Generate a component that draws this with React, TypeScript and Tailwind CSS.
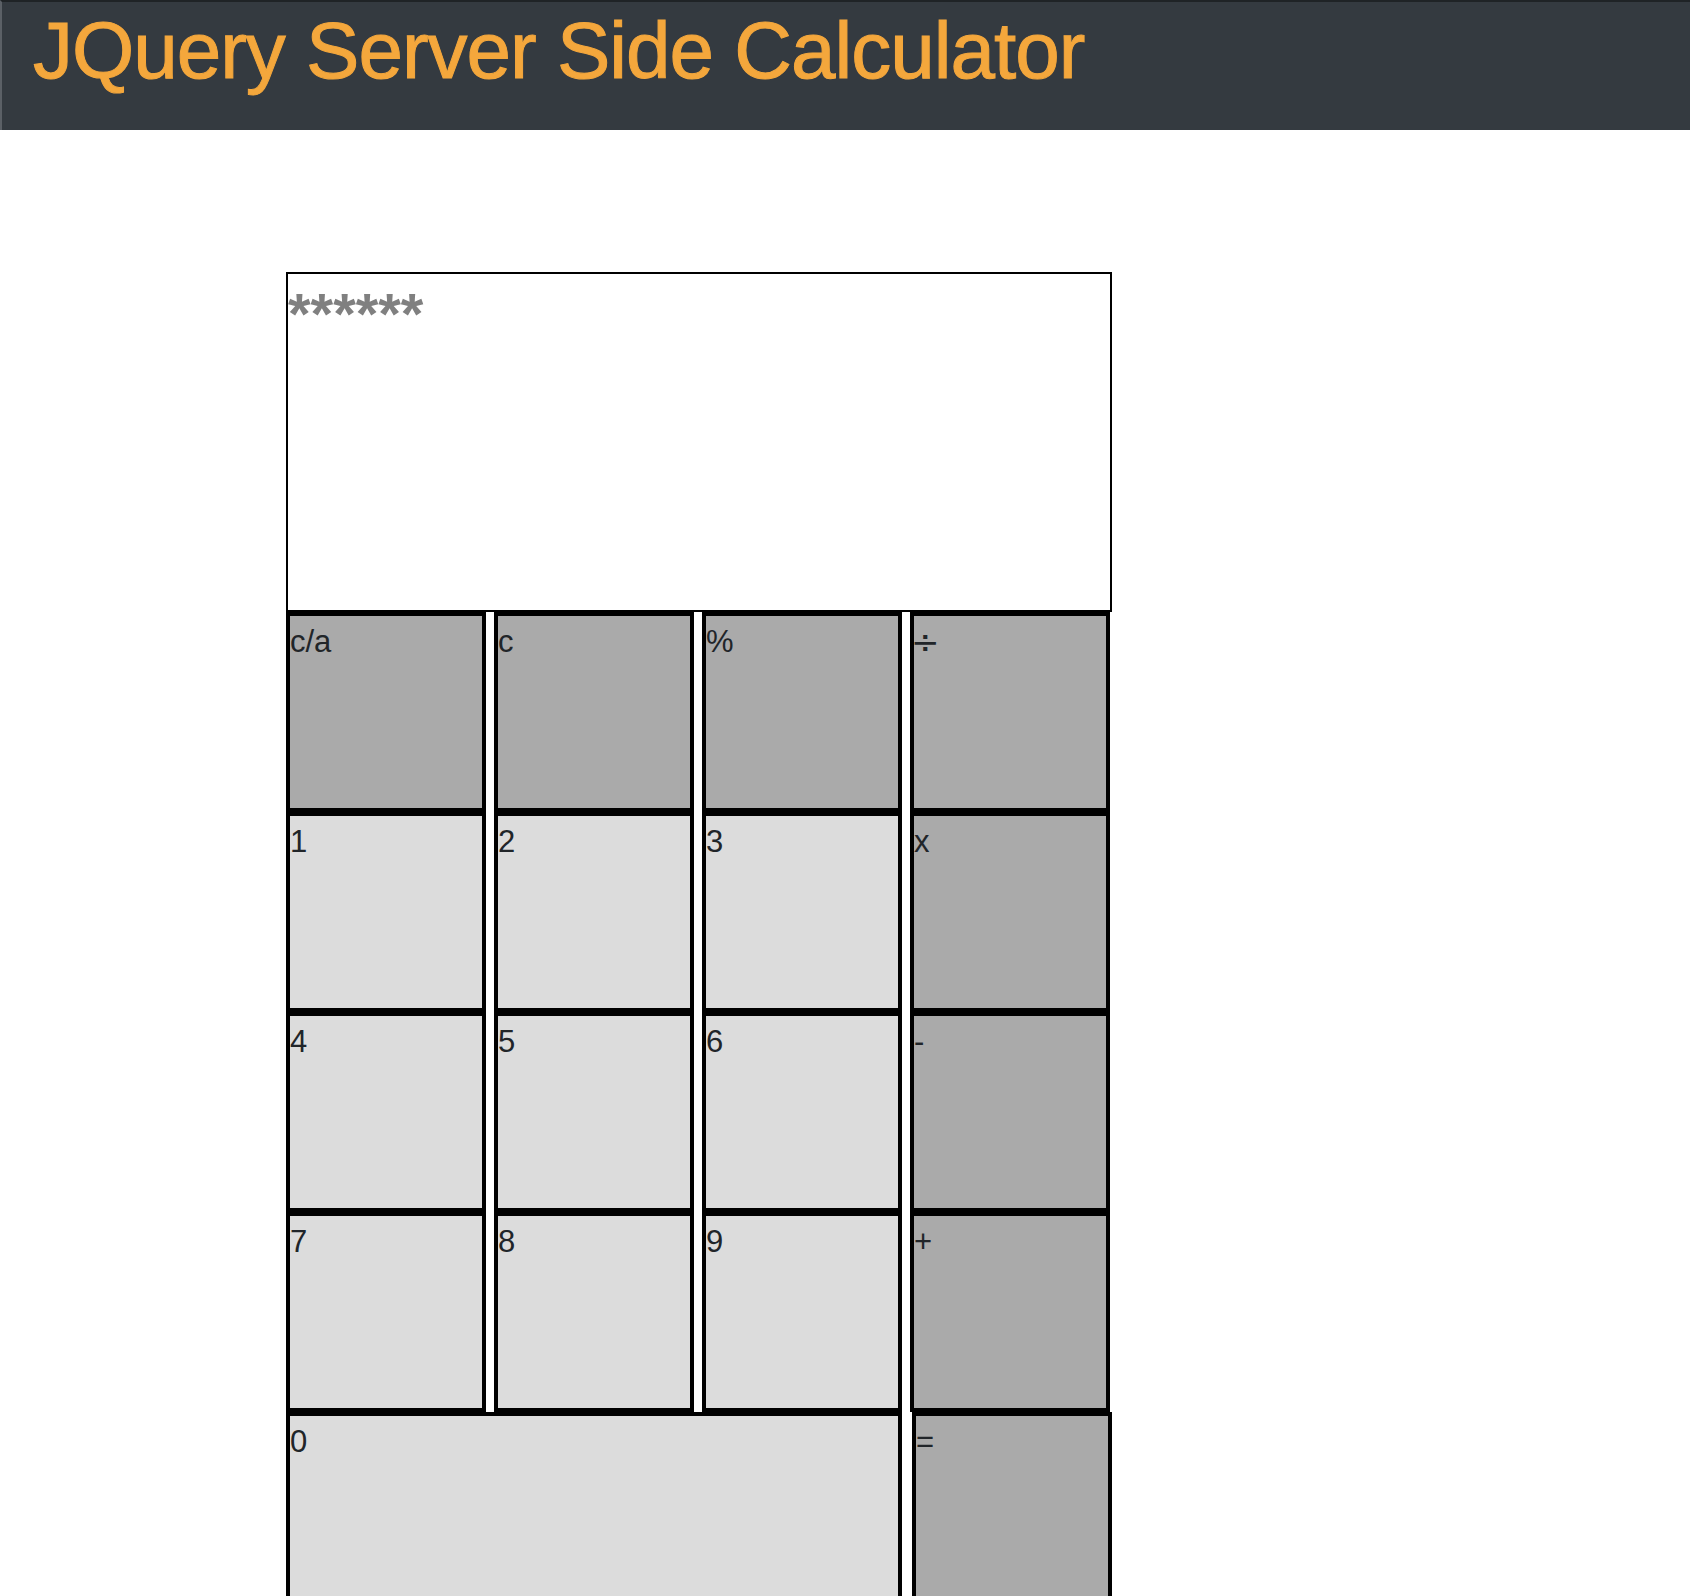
const rows: { label: string; op?: boolean }[][] = [
  [{ label: 'c/a', op: true }, { label: 'c', op: true }, { label: '%', op: true }, { label: '÷', op: true }],
  [{ label: '1' }, { label: '2' }, { label: '3' }, { label: 'x', op: true }],
  [{ label: '4' }, { label: '5' }, { label: '6' }, { label: '-', op: true }],
  [{ label: '7' }, { label: '8' }, { label: '9' }, { label: '+', op: true }],
]

const keyClass = 'flex items-start justify-start h-[200px] border-4 border-black text-[31px] leading-[52px] text-[#212529] text-left'

export default function App() {
  return (
    <div className="min-h-screen bg-white font-['Liberation_Sans',Arial,sans-serif]">
      {/* Header */}
      <header className="h-[130px] bg-[#343a40] border-t-2 border-t-[#1f2326] border-l-2 border-l-[#5b6066]">
        <h1 className="pl-[31px] pt-[1px] text-[80px] leading-[96px] tracking-[-1px] text-[#f4a73c] [-webkit-text-stroke:1px_#f4a73c]">
          JQuery Server Side Calculator
        </h1>
      </header>

      {/* Calculator */}
      <main className="pl-[286px] pt-[142px]">
        <div className="w-[826px] h-[340px] border-2 border-black pt-[11px]">
          <span className="text-[58px] leading-none font-bold text-[#808080]">******</span>
        </div>

        {rows.map((row, i) => (
          <div key={i} className="flex gap-2">
            {row.map((k) => (
              <button key={k.label} className={`${keyClass} w-[200px] ${k.op ? 'bg-[#aaaaaa]' : 'bg-[#dcdcdc]'}`}>
                {k.label === '÷' ? <span className="text-[34px] -ml-[3px] font-['DejaVu_Sans',sans-serif]">÷</span> : k.label}
              </button>
            ))}
          </div>
        ))}

        <div className="flex gap-[10px]">
          <button className={`${keyClass} w-[616px] bg-[#dcdcdc]`}>0</button>
          <button className={`${keyClass} w-[200px] bg-[#aaaaaa]`}>=</button>
        </div>
      </main>
    </div>
  )
}
